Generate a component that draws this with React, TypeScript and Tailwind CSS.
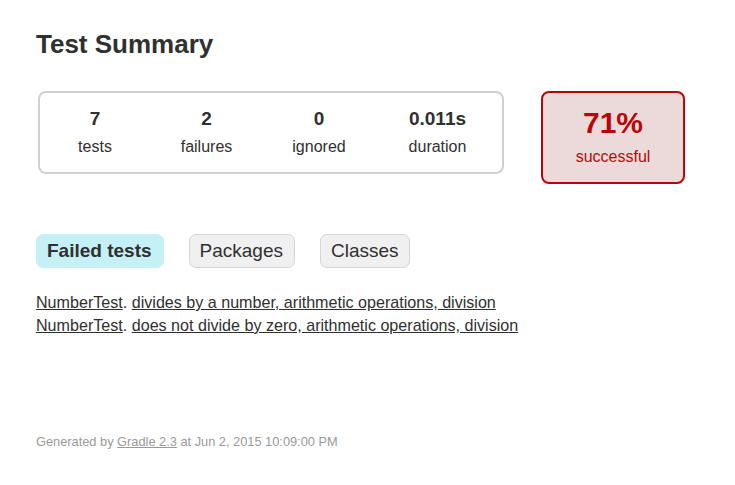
const counters = [
  { value: "7", label: "tests", width: "w-[110px]" },
  { value: "2", label: "failures", width: "w-[113px]" },
  { value: "0", label: "ignored", width: "w-[112px]" },
  { value: "0.011s", label: "duration", width: "w-[125px]" },
];

const failed = [
  "divides by a number, arithmetic operations, division",
  "does not divide by zero, arithmetic operations, division",
];

const App = () => {
  return (
    <div className="min-h-[485px] bg-white px-[36px] pt-[28px] font-['Liberation_Sans',Arial,sans-serif] text-[#303030]">
      <h1 className="text-[26px] font-bold leading-[32px]">Test Summary</h1>

      <div className="mt-[31px] flex items-start">
        <div className="ml-[2px] flex h-[83px] w-[466px] items-center rounded-[8px] border-2 border-[#d0d0d0]">
          {counters.map((c) => (
            <div key={c.label} className={`${c.width} text-center`}>
              <div className="text-[19px] font-bold leading-[24px]">{c.value}</div>
              <div className="mt-[5px] text-[16px] leading-[22px]">{c.label}</div>
            </div>
          ))}
        </div>

        <div className="ml-[37px] flex h-[93px] w-[144px] flex-col items-center justify-center rounded-[8px] border-2 border-[#b60808] bg-[#ecdada] pb-[3px] text-[#b60808]">
          <div className="text-[30px] font-bold leading-[34px]">71%</div>
          <div className="mt-[7px] text-[16px] leading-[20px]">successful</div>
        </div>
      </div>

      <ul className="mt-[50px] flex gap-[25px] text-[19px]">
        <li className="flex h-[34px] items-center rounded-[7px] border border-[#c5f0f5] bg-[#c5f0f5] pl-[10px] pr-[11px] font-bold">
          Failed tests
        </li>
        <li className="flex h-[34px] items-center rounded-[7px] border border-[#d4d4d4] bg-[#f0f0f0] pl-[10px] pr-[11px]">
          Packages
        </li>
        <li className="flex h-[34px] items-center rounded-[7px] border border-[#d4d4d4] bg-[#f0f0f0] px-[10px]">
          Classes
        </li>
      </ul>

      <ul className="mt-[23px] text-[16.1px] leading-[23px]">
        {failed.map((t) => (
          <li key={t}>
            <a href="#" className="underline">NumberTest</a>.{" "}
            <a href="#" className="underline">{t}</a>
          </li>
        ))}
      </ul>

      <div className="mt-[97px] text-[12.8px] leading-[16px] text-[#999]">
        Generated by{" "}
        <a href="#" className="text-[#999] underline">Gradle 2.3</a> at Jun 2, 2015 10:09:00 PM
      </div>
    </div>
  );
};

export default App;
